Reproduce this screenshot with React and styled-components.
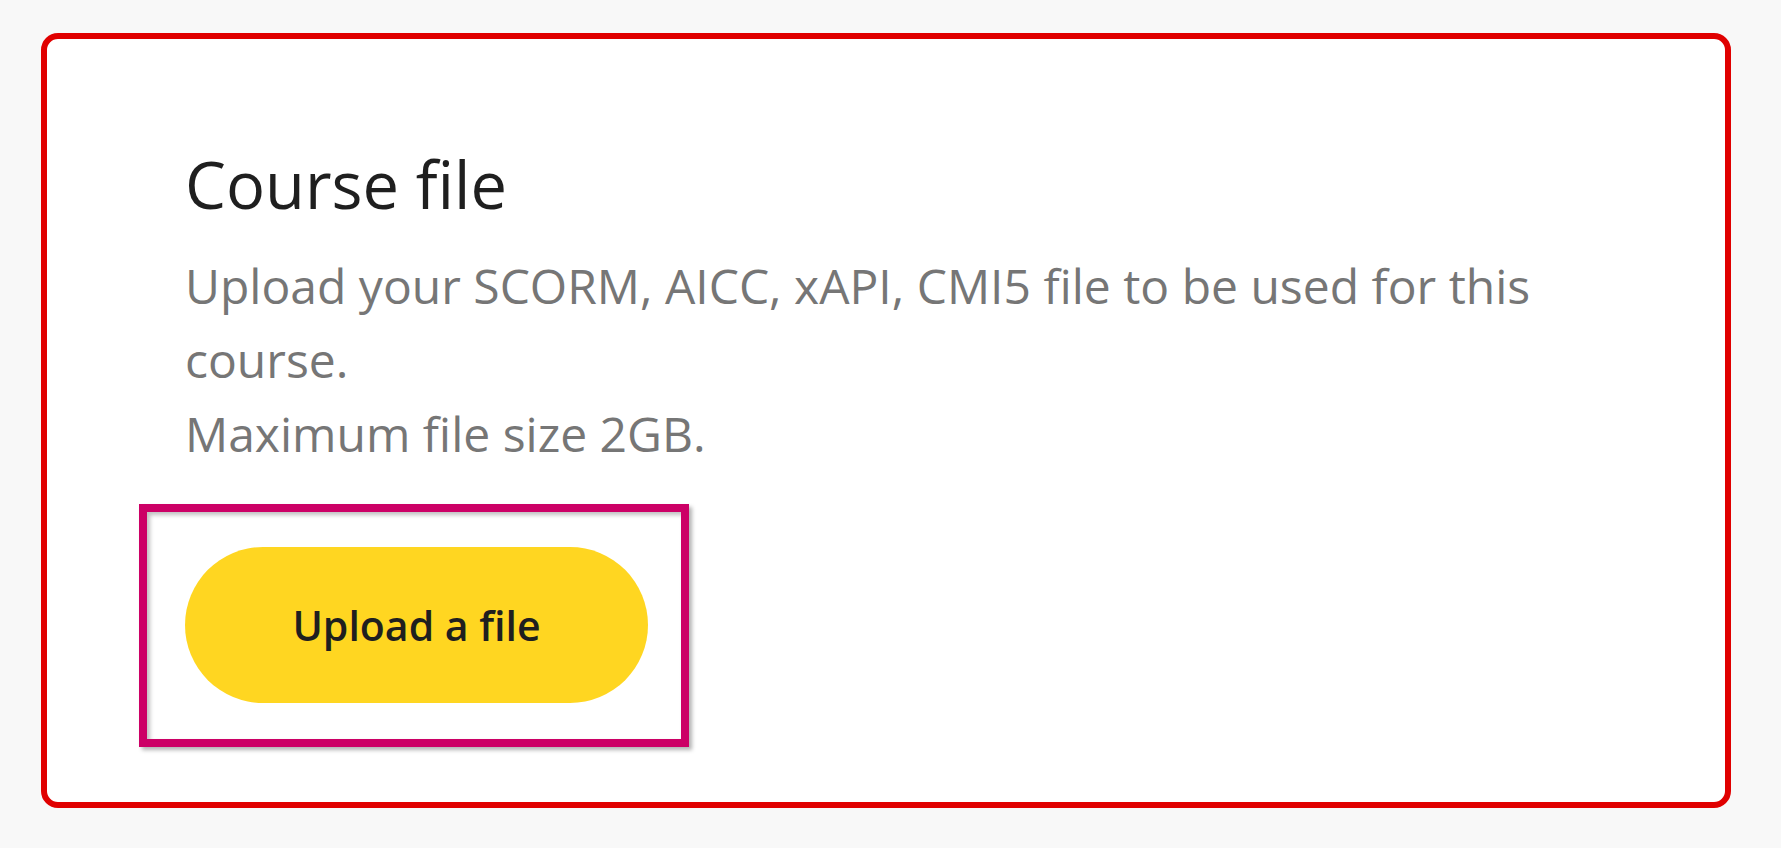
import styled, { createGlobalStyle } from "styled-components";

const GlobalStyle = createGlobalStyle`
  html, body {
    margin: 0;
    padding: 0;
    background: #f8f8f8;
  }
  body {
    font-family: "Open Sans", "Noto Sans", sans-serif;
  }
  * {
    box-sizing: border-box;
  }
`;

export default function App() {
  return (
    <>
      <GlobalStyle />
      <Page>
        <Card>
          <Title>Course file</Title>
          <Description>
            Upload your SCORM, AICC, xAPI, CMI5 file to be used for this course.
            <br />
            Maximum file size 2GB.
          </Description>
          <Highlight>
            <UploadButton type="button">Upload a file</UploadButton>
          </Highlight>
        </Card>
      </Page>
    </>
  );
}

const Page = styled.div`
  padding: 33px 50px 40px 41px;
`;

const Card = styled.section`
  width: 1690px;
  background: #ffffff;
  border: 6px solid #e00000;
  border-radius: 17px;
  padding: 105px 138px 55px 138px;
`;

const Title = styled.h2`
  margin: 0 0 25px;
  font-size: 65px;
  line-height: 80px;
  font-weight: 400;
  color: #1f1f1f;
`;

const Description = styled.p`
  margin: 0 0 33px;
  max-width: 1400px;
  font-size: 48px;
  line-height: 74px;
  color: #767676;
`;

const Highlight = styled.div`
  display: inline-block;
  margin-left: -46px;
  border: 8px solid #cc0066;
  padding: 35px 33px 36px 38px;
  box-shadow: 3px 3px 4px rgba(0, 0, 0, 0.3),
    inset 3px 3px 4px rgba(0, 0, 0, 0.25);
`;

const UploadButton = styled.button`
  display: flex;
  align-items: center;
  justify-content: center;
  width: 463px;
  height: 156px;
  border: none;
  border-radius: 78px;
  background: #ffd621;
  color: #1f1f1f;
  font-family: "Open Sans", "Noto Sans", sans-serif;
  font-size: 41px;
  font-weight: 600;
  cursor: pointer;
`;
